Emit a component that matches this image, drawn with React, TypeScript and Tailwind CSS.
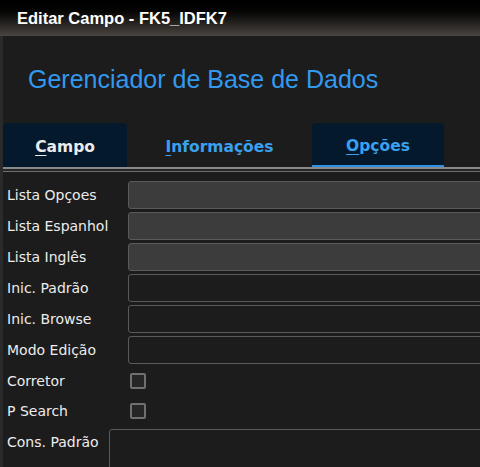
import React from "react";

const labelCls =
  "shrink-0 text-[14px] leading-none text-[#ececec] font-['DejaVu_Sans',sans-serif] whitespace-nowrap";

function InputRow({ label, disabled }: { label: string; disabled?: boolean }) {
  return (
    <div className="flex items-center h-[28px] mb-[3px]">
      <div className={"w-[125px] pl-[4px] " + labelCls}>{label}</div>
      <div
        className={
          "h-[28px] w-[420px] shrink-0 rounded-[3px] border border-[#5a5a5a] " +
          (disabled ? "bg-[#3c3c3c]" : "bg-[#1c1c1c]")
        }
      />
    </div>
  );
}

function CheckRow({ label }: { label: string }) {
  return (
    <div className="flex items-center h-[30px] pb-[3px]">
      <div className={"w-[127px] pl-[4px] " + labelCls}>{label}</div>
      <div className="shrink-0 w-[16px] h-[16px] rounded-[2px] border-2 border-[#707070] bg-[#262626]" />
    </div>
  );
}

function Tab({
  label,
  width,
  active,
  selected,
}: {
  label: string;
  width: string;
  active?: boolean;
  selected?: boolean;
}) {
  const first = label.charAt(0);
  const rest = label.slice(1);
  return (
    <div
      className={
        "h-[44px] pt-[6px] flex items-center justify-center rounded-t-[4px] shrink-0 " +
        width +
        " " +
        (active ? "bg-[#04192b] " : "") +
        (selected ? "border-b-2 border-[#2f8fe0] " : "")
      }
    >
      <span
        className={
          "text-[15.5px] leading-none font-bold font-['DejaVu_Sans',sans-serif] " +
          (active && !selected ? "text-[#ececec]" : "text-[#3aa0f0]")
        }
      >
        <span className="underline underline-offset-[3px]">{first}</span>
        {rest}
      </span>
    </div>
  );
}

export default function App() {
  return (
    <div className="w-[480px] h-[467px] overflow-hidden bg-[#1c1c1c] flex flex-col">
      <div className="h-[36px] shrink-0 bg-gradient-to-b from-[#000000] to-[#4a4540] flex items-center pl-[17px]">
        <span className="text-[16.5px] leading-none font-bold text-white font-['Liberation_Sans',Arial,sans-serif]">
          Editar Campo - FK5_IDFK7
        </span>
      </div>
      <div className="flex-1 border-l-[3px] border-[#2a2a2a] flex flex-col">
        <div className="pt-[31px] pl-[25px] h-[56px] mb-[31px]">
          <div className="text-[25px] leading-[25px] text-[#3399ee] font-['Liberation_Sans',Arial,sans-serif] whitespace-nowrap">
            Gerenciador de Base de Dados
          </div>
        </div>
        <div className="flex h-[44px]">
          <Tab label="Campo" width="w-[124px]" active />
          <Tab label="Informações" width="w-[185px]" />
          <Tab label="Opções" width="w-[132px]" active selected />
        </div>
        <div className="h-[2px] bg-[#8a8a8a]" />
        <div className="h-[2px] bg-[#262626]" />
        <div className="h-[1px] bg-[#6e6e6e]" />
        <div className="pt-[9px]">
          <InputRow label="Lista Opçoes" disabled />
          <InputRow label="Lista Espanhol" disabled />
          <InputRow label="Lista Inglês" disabled />
          <InputRow label="Inic. Padrão" />
          <InputRow label="Inic. Browse" />
          <InputRow label="Modo Edição" />
          <CheckRow label="Corretor" />
          <CheckRow label="P Search" />
          <div className="flex mt-[2px]">
            <div className={"w-[106px] pl-[4px] pt-[6px] " + labelCls}>Cons. Padrão</div>
            <div className="h-[80px] w-[400px] shrink-0 rounded-[3px] border border-[#5a5a5a] bg-[#1c1c1c]" />
          </div>
        </div>
      </div>
    </div>
  );
}
